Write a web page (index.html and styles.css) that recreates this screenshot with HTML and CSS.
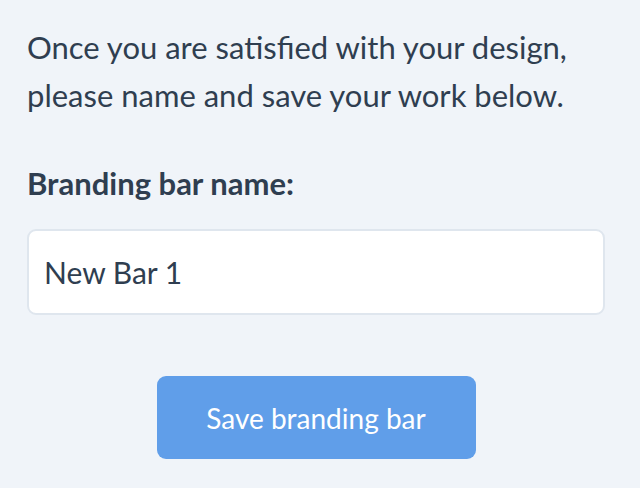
FILE: index.html
```html
<!DOCTYPE html>
<html lang="en">
<head>
<meta charset="utf-8">
<title>Save branding bar</title>
<link rel="stylesheet" href="styles.css">
</head>
<body>
<main class="panel">
  <p class="intro">Once you are satisfied with your design, please name and save your work below.</p>
  <label class="field-label" for="bar-name">Branding bar name:</label>
  <input class="field-input" id="bar-name" type="text" value="New Bar 1">
  <div class="actions">
    <button class="save-btn" type="button">Save branding bar</button>
  </div>
</main>
</body>
</html>
```
FILE: styles.css
```css
html, body {
  margin: 0;
  padding: 0;
  background: #f0f4f9;
}
body {
  font-family: "Lato", "Liberation Sans", sans-serif;
  color: #2f3e50;
}
.panel {
  display: flex;
  flex-direction: column;
  padding: 23px 35px 0 27px;
}
.intro {
  margin: 0;
  font-size: 31px;
  line-height: 48px;
  width: 570px;
}
.field-label {
  margin-top: 40px;
  font-size: 31px;
  line-height: 48px;
  font-weight: 700;
}
.field-input {
  margin-top: 22px;
  box-sizing: border-box;
  height: 86px;
  width: 100%;
  border: 2px solid #dfe6ee;
  border-radius: 9px;
  background: #ffffff;
  padding: 0 15px;
  font-family: inherit;
  font-size: 30px;
  color: #2f3e50;
  outline: none;
}
.actions {
  display: flex;
  justify-content: center;
  margin-top: 61px;
}
.save-btn {
  width: 319px;
  height: 83px;
  border: none;
  border-radius: 9px;
  background: #609ee9;
  color: #ffffff;
  font-family: inherit;
  font-size: 28px;
}
```
